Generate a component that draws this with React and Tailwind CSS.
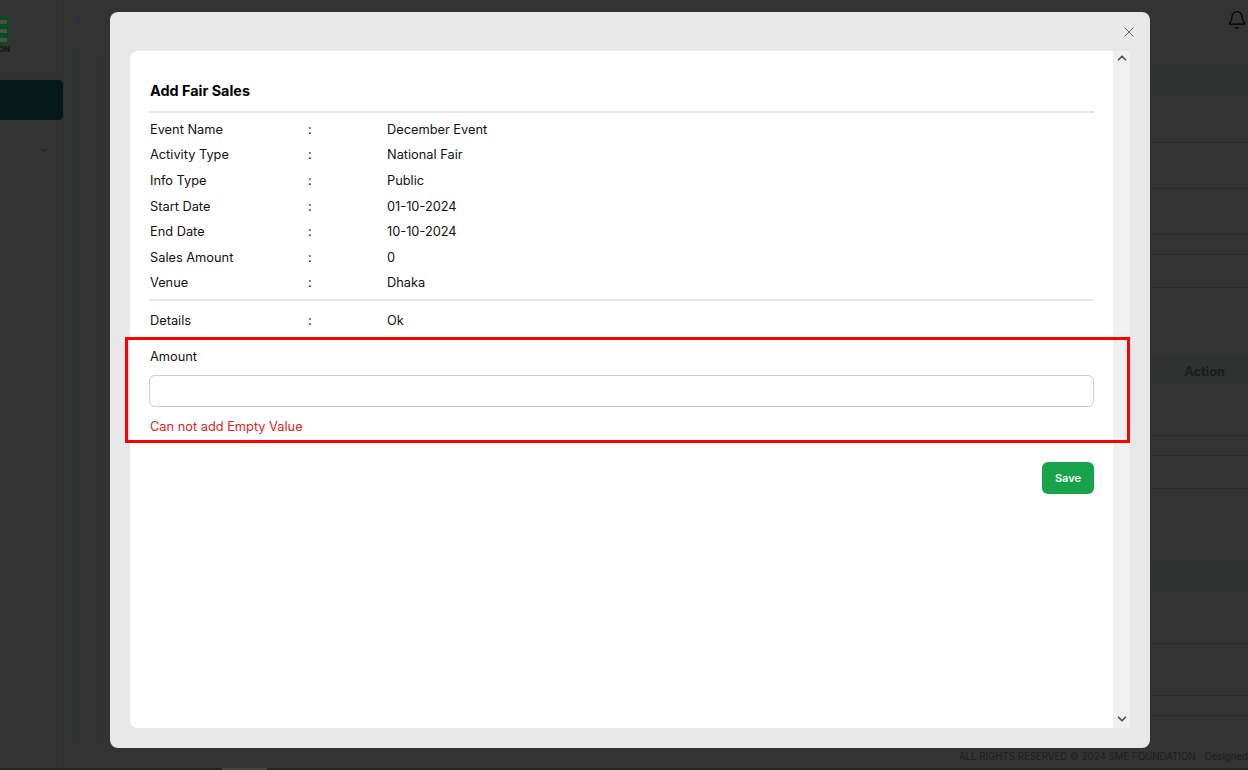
import React from 'react';
import { Bell, ChevronDown, ChevronUp, X } from 'lucide-react';

const details = [
  ['Event Name', 'December Event'],
  ['Activity Type', 'National Fair'],
  ['Info Type', 'Public'],
  ['Start Date', '01-10-2024'],
  ['End Date', '10-10-2024'],
  ['Sales Amount', '0'],
  ['Venue', 'Dhaka'],
];

// dimmed table rows behind the modal, top to bottom
const backdropRows = [
  { id: 1, cls: 'h-[15px]' },
  { id: 2, cls: 'h-[32px] bg-[#2f3231]' },
  { id: 3, cls: 'h-[46px] border-b border-[#2c2c2c]' },
  { id: 4, cls: 'h-[46px] border-b border-[#2c2c2c]' },
  { id: 5, cls: 'h-[46px] border-b border-[#2c2c2c]' },
  { id: 6, cls: 'h-[20px] border-b border-[#2c2c2c]' },
  { id: 7, cls: 'h-[33px] border-b border-[#2c2c2c]' },
  { id: 8, cls: 'h-[70px]' },
  { id: 9, cls: 'h-[26px] bg-[#2f3231]', action: true },
  { id: 10, cls: 'h-[52px] border-b border-[#2c2c2c]' },
  { id: 11, cls: 'h-[20px] border-b border-[#2c2c2c]' },
  { id: 12, cls: 'h-[33px] border-b border-[#2c2c2c]' },
  { id: 13, cls: 'h-[71px]' },
  { id: 14, cls: 'h-[32px] bg-[#2f3231]' },
  { id: 15, cls: 'h-[52px] border-b border-[#2c2c2c]' },
  { id: 16, cls: 'h-[52px] border-b border-[#2c2c2c]' },
  { id: 17, cls: 'h-[20px] border-b border-[#2c2c2c]' },
];

const DetailRow = ({ label, value }) => (
  <div className="ml-[0.8px] flex h-[25.6px] items-center text-[12.8px] text-[#111]">
    <span className="w-[158px]">{label}</span>
    <span className="w-[79px]">:</span>
    <span>{value}</span>
  </div>
);

const App = () => {
  return (
    <div className="relative h-[770px] w-[1248px] overflow-hidden bg-[#333333] font-['Inter',sans-serif]">
      {/* Dimmed page behind the modal */}
      <div className="flex h-[768px]">
        <aside className="w-[64px] shrink-0 overflow-hidden border-r border-[#303030]">
          <div className="h-[73px] border-b border-[#303030] pt-4">
            <div className="flex h-[29px] w-[9px] flex-col gap-[5px] bg-[#0c4a1c] pt-1">
              <div className="h-1 w-[7px] bg-[#4c4c4c]" />
              <div className="h-1 w-[7px] bg-[#4c4c4c]" />
              <div className="h-1 w-[7px] bg-[#4c4c4c]" />
            </div>
            <div className="flex w-[10px] justify-end text-[7.5px] font-bold leading-[10px] text-[#151515]">
              <span className="whitespace-nowrap">ON</span>
            </div>
          </div>
          <div className="mt-[7px] h-10 w-[63px] rounded-r bg-[#06191a]" />
          <div className="mt-[25px] flex justify-end pr-[14px] text-[#222]">
            <ChevronDown size={10} strokeWidth={3} />
          </div>
        </aside>
        <main className="flex min-w-0 flex-1 flex-col">
          <div className="flex h-10 shrink-0 items-center justify-between pl-[11px] pr-px">
            <svg width="8" height="18" viewBox="0 0 8 18" fill="none" stroke="#2a2f55" strokeWidth="1.5">
              <path d="M7 1 L1.5 9 L7 17" />
            </svg>
            <Bell size={20} strokeWidth={1.5} className="text-black" />
          </div>
          <div className="ml-[6px] mt-2 flex h-[695px] shrink-0 rounded-bl-lg border-l-8 border-[#2f3333] pl-5 pt-[2px]">
            <div className="flex-1 rounded-bl-lg border-l border-[#303030] pl-3">
              {backdropRows.map((row) => (
                <div key={row.id} className={`flex items-center justify-end pr-[23px] ${row.cls}`}>
                  {row.action && <span className="pt-px text-[12.8px] font-bold text-[#1a1c1e]">Action</span>}
                </div>
              ))}
            </div>
          </div>
          <footer className="mt-[3px] flex h-[22px] shrink-0 items-center justify-end gap-[9px] overflow-hidden whitespace-nowrap text-[9.7px] text-[#182020]">
            <span>ALL RIGHTS RESERVED © 2024 SME FOUNDATION</span>
            <span>Designed</span>
          </footer>
        </main>
      </div>
      <div className="h-[2px] bg-[#222222] pl-[222px]">
        <div className="h-[2px] w-[45px] bg-[#444444]" />
      </div>

      {/* Modal */}
      <div className="absolute left-[110px] top-3 flex h-[736px] w-[1040px] flex-col rounded-lg bg-[#e8e8e8] px-5 pb-5">
        <div className="flex h-[39px] shrink-0 items-center justify-end pt-px">
          <X size={16} strokeWidth={1.25} className="-mr-[7px] text-[#444]" />
        </div>
        <div className="flex min-h-0 flex-1 overflow-hidden rounded-l-lg bg-white">
          <div className="min-w-0 flex-1 pl-[19.2px] pr-[19px] pt-[30px]">
            <h2 className="ml-[0.8px] text-[14.4px] font-bold leading-[20px] text-black">Add Fair Sales</h2>
            <div className="mt-[10px] h-[2px] bg-[#e5e7eb]" />
            <div className="mt-[3.7px]">
              {details.map(([label, value]) => (
                <DetailRow key={label} label={label} value={value} />
              ))}
            </div>
            <div className="mt-[3.3px] h-[2px] bg-[#e5e7eb]" />
            <div className="mt-[7px]">
              <DetailRow label="Details" value="Ok" />
            </div>
            <label className="ml-[0.8px] mt-[13px] block text-[12.8px] leading-5 text-[#111]">Amount</label>
            <input className="mt-2 block h-8 w-full rounded-md border border-[#ccc] bg-white" />
            <p className="ml-[0.8px] mt-[10px] text-[12.8px] leading-5 text-[#dc2626]">Can not add Empty Value</p>
            <div className="mt-[25px] flex justify-end">
              <button className="h-8 w-[52px] rounded-md bg-[#16a34a] pt-px text-[11px] font-semibold text-white">Save</button>
            </div>
          </div>
          <div className="flex w-[17px] shrink-0 flex-col items-center justify-between bg-[#f0f0f0] pb-[2px] text-[#505050]">
            <ChevronUp size={14} strokeWidth={3} />
            <ChevronDown size={14} strokeWidth={3} />
          </div>
        </div>
      </div>

      {/* Red annotation box */}
      <div className="absolute left-[125px] top-[337px] h-[106px] w-[1005px] border-[3px] border-[#ff0000]" />
    </div>
  );
};

export default App;
